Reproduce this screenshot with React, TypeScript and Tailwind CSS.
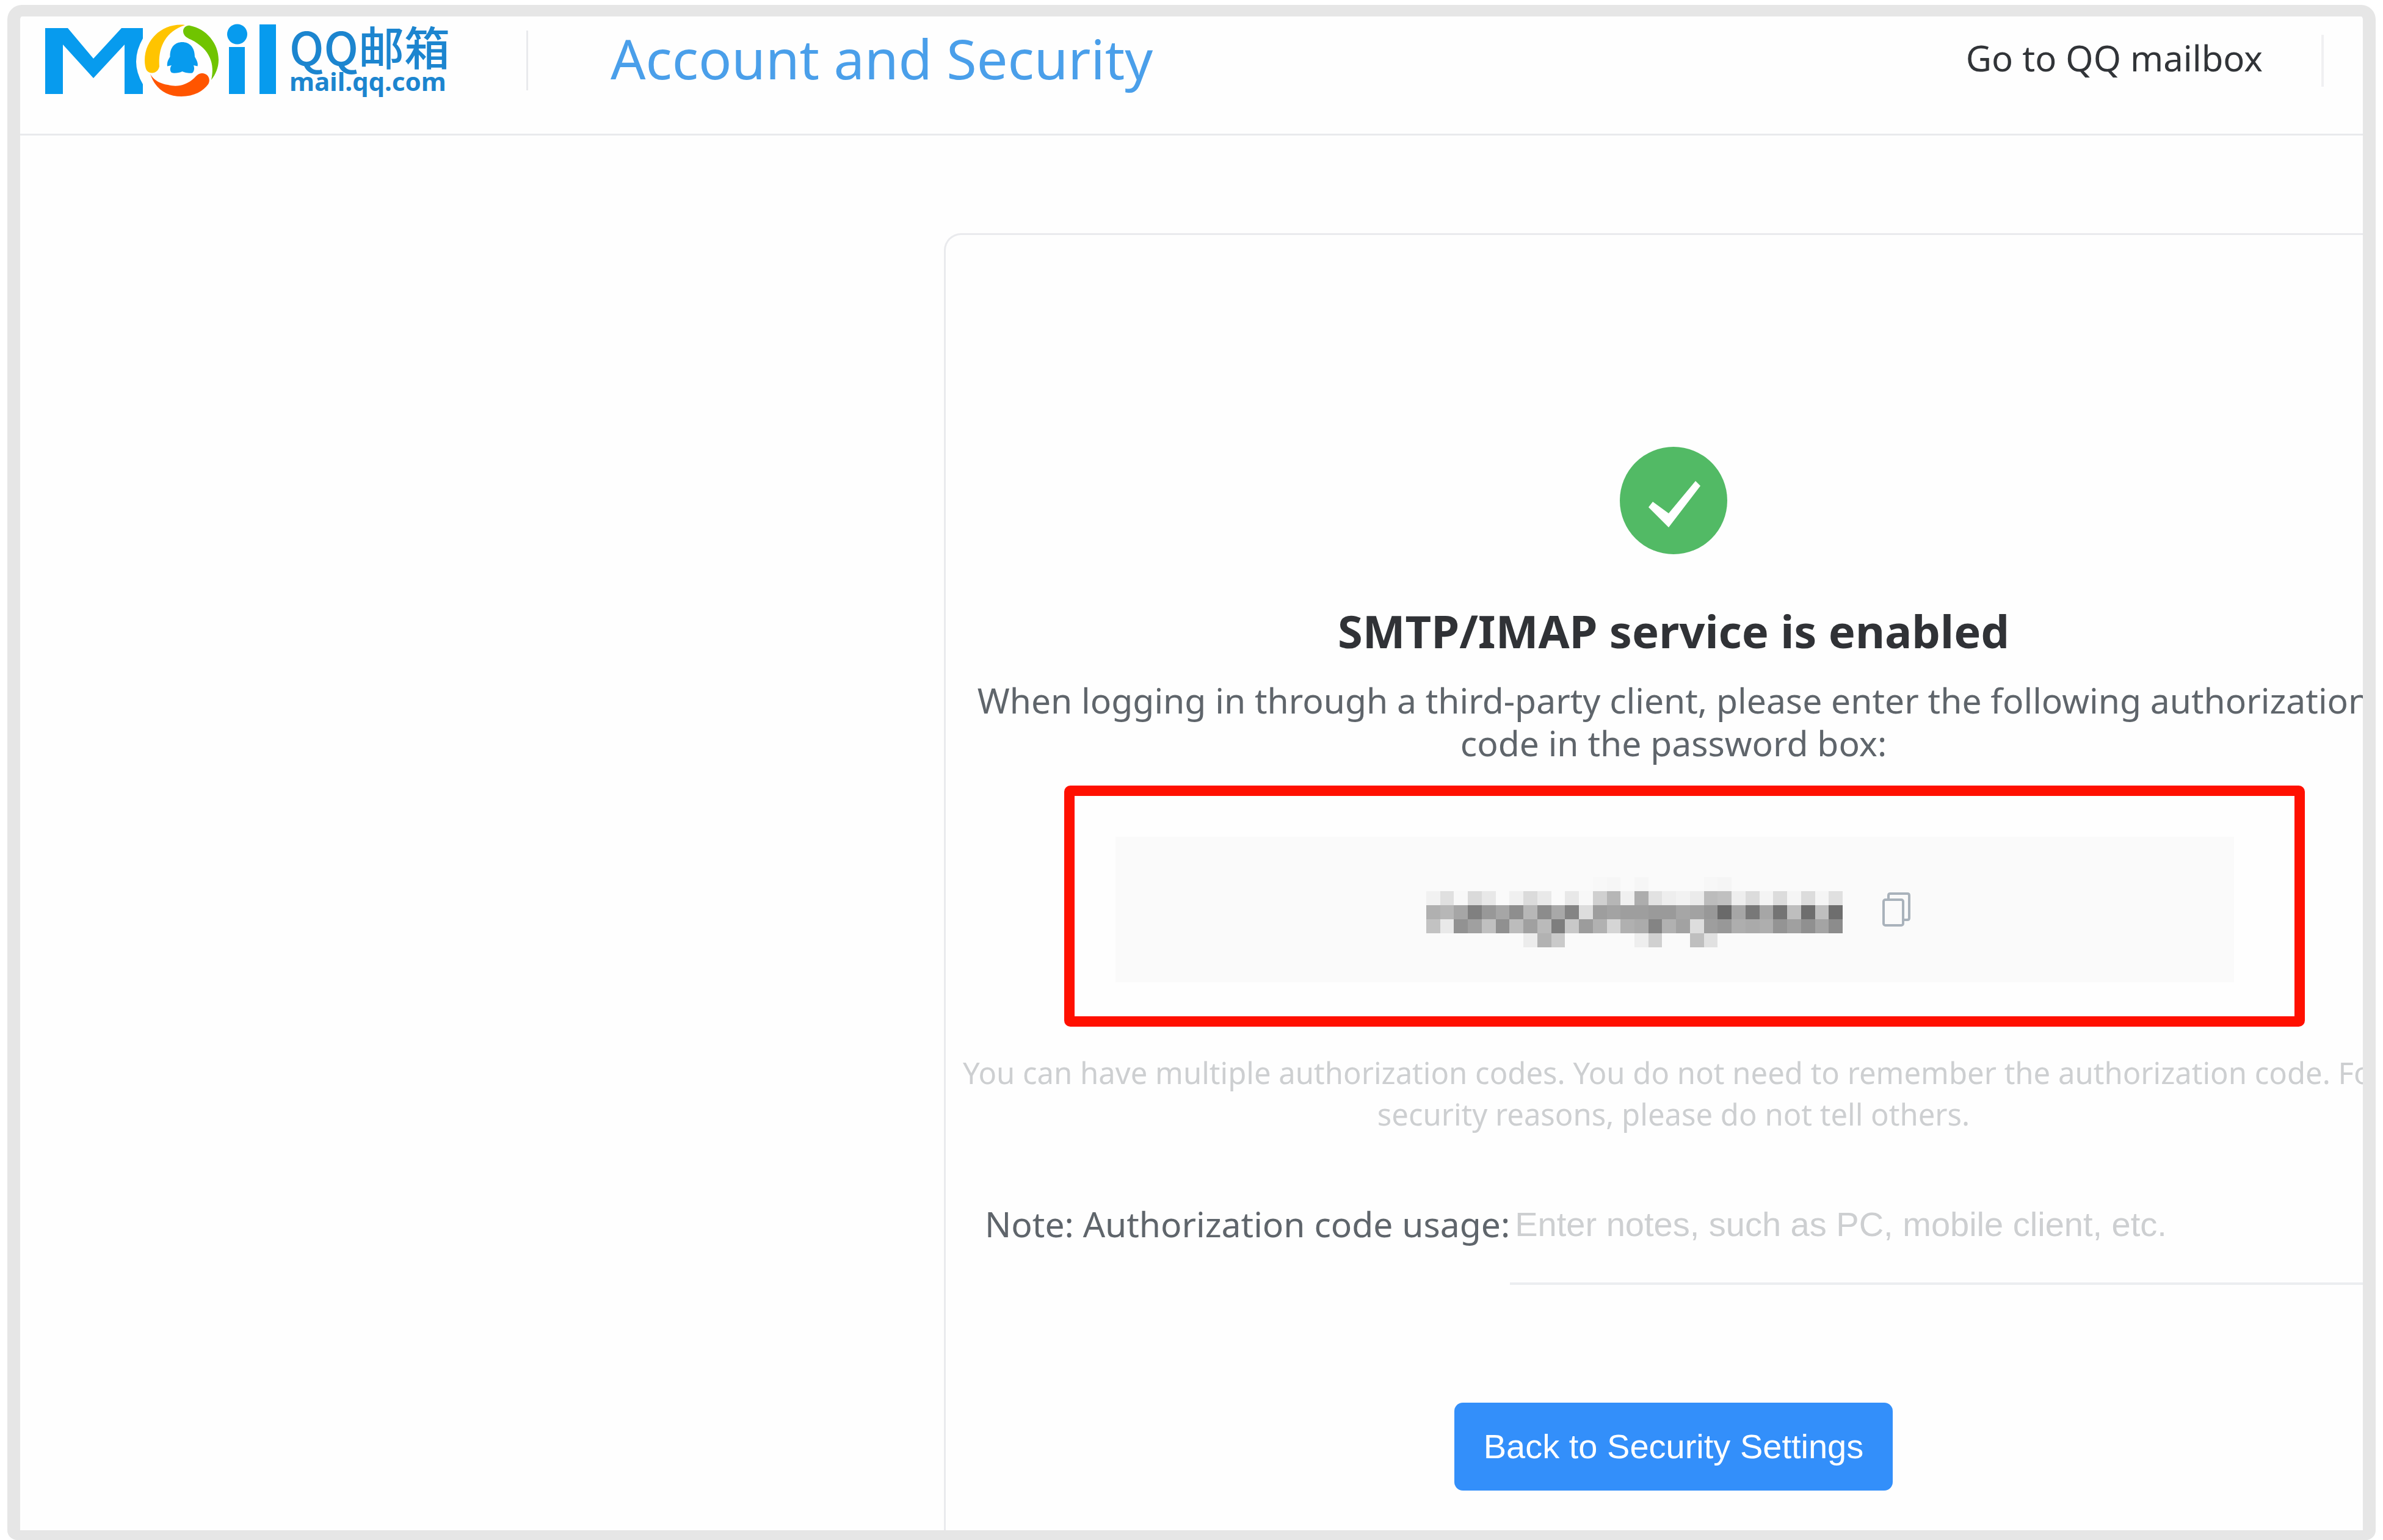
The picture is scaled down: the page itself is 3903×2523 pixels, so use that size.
import React from 'react';

// Grey level of every mosaic cell, row by row; blank cells show the panel behind
const MOSAIC = [
  '.. .. .. .. .. .. .. .. .. .. .. .. f8 f6 .. f6 .. .. .. .. f7 f5 .. .. .. .. .. .. .. ..',
  'f1 e0 f8 da e8 .. f0 db e9 .. e8 f8 d0 b6 f0 ad e2 ee f2 eb bc c0 ee dc f4 dc f5 dc f5 e0',
  'b0 b7 a6 80 98 a6 8e b7 8c a8 84 dd 9e a3 9e 9e 9a 9a a6 a2 98 6a a6 78 a6 74 be 6e bf 6e',
  'c2 e9 92 a0 c0 90 bc a0 ba 7e c8 9c b1 d5 b0 ab 84 b1 a2 dd 9e 98 ae aa ae 94 a0 90 a4 8c',
  '.. .. .. .. .. .. .. ec b2 ca .. .. .. .. .. ee d0 .. .. bf e1 .. .. .. .. .. .. .. .. ..',
].map((row) => row.split(' '));

function MaskedCode() {
  return (
    <svg
      role="img"
      aria-label="Authorization code (hidden)"
      viewBox="0 0 30 5"
      preserveAspectRatio="none"
      shapeRendering="crispEdges"
      className="mt-2 h-[115px] w-[682px]"
    >
      {MOSAIC.map((row, y) =>
        row.map((tone, x) =>
          tone === '..' ? null : (
            <rect key={`${x}-${y}`} x={x} y={y} width="1" height="1" fill={`#${tone}${tone}${tone}`} />
          )
        )
      )}
    </svg>
  );
}

function MailLogo() {
  return (
    <svg viewBox="74 38 380 120" className="h-[120px] w-[380px] shrink-0" aria-hidden="true">
      <g fill="#079bee">
        <path d="M74 45H111L153 95L199 45H234V62Q212 100 234 137V153H204V72L153 127L103 72V153H74Z" />
        <path d="M298.500 68C310 68 319 76 319 92C322 97 325 103 323.500 107.500L317 106C319 111 318 116 315 118.500C310 119.500 302 118 298.500 116C294 118.500 285 119.500 281 118C278 115 278 110 281 106L274 107.500C273 101 276 96 278.500 92C278 76 287 68 298.500 68Z" />
        <circle cx="388.500" cy="55" r="16.500" />
        <rect x="375" y="76" width="26" height="77" />
        <rect x="425" y="39" width="27" height="114" />
      </g>
      <path fill="#ffc400" d="M303 40C268 36 237 62 237 98C237 104 238 110 240 114Q244 119 250 118.500Q259 117 261 108C259 80 268 52 303 40Z" />
      <path fill="#70c400" d="M311 41C338 46 358 70 358 97C358 110 353 121 346 130C352 105 345 80 313 64C303 60 300 55 300 50C300 44 306 40 311 41Z" />
      <path fill="#ff5500" d="M246 120C254 144 272 157 297 157C318 157 333 148 341 137C346 128 340 119 331 119C325 119 322 123 318 127C305 139 290 142 275 138C260 136 250 128 246 120Z" />
    </svg>
  );
}

function Header() {
  return (
    <header className="flex h-[195px] items-center border-b-[3px] border-[#e9eaed] pb-12 pl-[41px]">
      <a href="#" className="flex w-[788px] shrink-0 items-center gap-5" aria-label="QQ Mail">
        <MailLogo />
        <span className="flex flex-col pb-1 text-[#1c85cf]">
          <span className="font-['Noto_Sans_CJK_SC',sans-serif] text-[75px] leading-[72px] font-medium">QQ邮箱</span>
          <span className="text-[42px] leading-[44px] font-bold">mail.qq.com</span>
        </span>
      </a>
      <span className="h-[98px] w-[3px] bg-[#e9eaed]" />
      <h1 className="ml-[135px] pb-2 text-[90px] leading-[120px] text-[#4a9fea]">Account and Security</h1>
      <a href="#" className="ml-auto pb-2 text-[58px] leading-[80px] text-[#313438]">
        Go to QQ mailbox
      </a>
      <span className="mr-[64px] ml-[96px] h-[85px] w-[4px] bg-[#f0f0f2]" />
    </header>
  );
}

function ServiceCard() {
  return (
    <section className="flex w-[2390px] shrink-0 flex-col items-center rounded-t-[28px] border-[3px] border-b-0 border-[#e9eaed] pt-[347px] text-center whitespace-nowrap">
      <svg viewBox="0 0 176 176" className="size-44" aria-hidden="true">
        <circle cx="88" cy="88" r="88" fill="#52ba65" />
        <path fill="#fff" d="M54 90L47 99L80 132L132 64L124 56L80 109Z" />
      </svg>

      <h2 className="mt-[74px] text-[74px] leading-[104px] font-bold text-[#303236]">SMTP/IMAP service is enabled</h2>
      <p className="mt-[26px] text-[57px] leading-[70px] text-[#5f656b]">
        When logging in through a third-party client, please enter the following authorization
        <br />
        code in the password box:
      </p>

      {/* Highlighted authorization code */}
      <div className="mt-[35px] ml-[35px] rounded-[10px] border-[17px] border-[#ff1000] pt-[67px] pr-[99px] pb-[56px] pl-[67px]">
        <div className="flex h-[238px] w-[1832px] items-center justify-center gap-[65px] bg-[#fafafa] pr-5">
          <MaskedCode />
          <button type="button" aria-label="Copy authorization code" className="text-[#a9b2bb]">
            <svg viewBox="0 0 46 56" className="h-14 w-[46px]" fill="none" stroke="currentColor" strokeWidth="4">
              <rect x="2" y="12" width="32" height="42" rx="3" />
              <path d="M10 10V5Q10 2 13 2H41Q44 2 44 5V42Q44 45 41 45H36" />
            </svg>
          </button>
        </div>
      </div>

      <p className="mt-[41px] text-[49px] leading-[68px] text-[#cdcfd1]">
        You can have multiple authorization codes. You do not need to remember the authorization code. For
        <br />
        security reasons, please do not tell others.
      </p>

      <div className="mt-[70px] flex w-full items-start pl-[64px]">
        <label htmlFor="usage" className="pt-[36px] text-[57px] leading-[80px] text-[#5f656b]">
          Note: Authorization code usage:
        </label>
        <input
          id="usage"
          type="text"
          placeholder="Enter notes, such as PC, mobile client, etc."
          className="h-[176px] min-w-0 flex-1 border-b-[4px] border-[#ebedf0] pt-[12px] pb-[31px] pl-2 font-['Liberation_Sans',sans-serif] text-[56px] outline-none placeholder:text-[#cdcfd1]"
        />
      </div>

      <button
        type="button"
        className="mt-[193px] h-[144px] rounded-[14px] bg-[#338ffa] px-[48px] font-['Liberation_Sans',sans-serif] text-[56px] text-white"
      >
        Back to Security Settings
      </button>
    </section>
  );
}

function App() {
  return (
    <div className="h-screen overflow-hidden bg-white px-3 pt-2 font-['Noto_Sans',sans-serif]">
      <div className="flex h-full flex-col overflow-hidden rounded-[24px] rounded-b-[16px] border-x-[21px] border-t-[19px] border-b-[16px] border-[#e6e6e6] bg-[#fefefe]">
        <Header />
        <main className="flex min-h-0 flex-1 overflow-hidden pt-[160px] pl-[1513px]">
          <ServiceCard />
        </main>
      </div>
    </div>
  );
}

export default App;
